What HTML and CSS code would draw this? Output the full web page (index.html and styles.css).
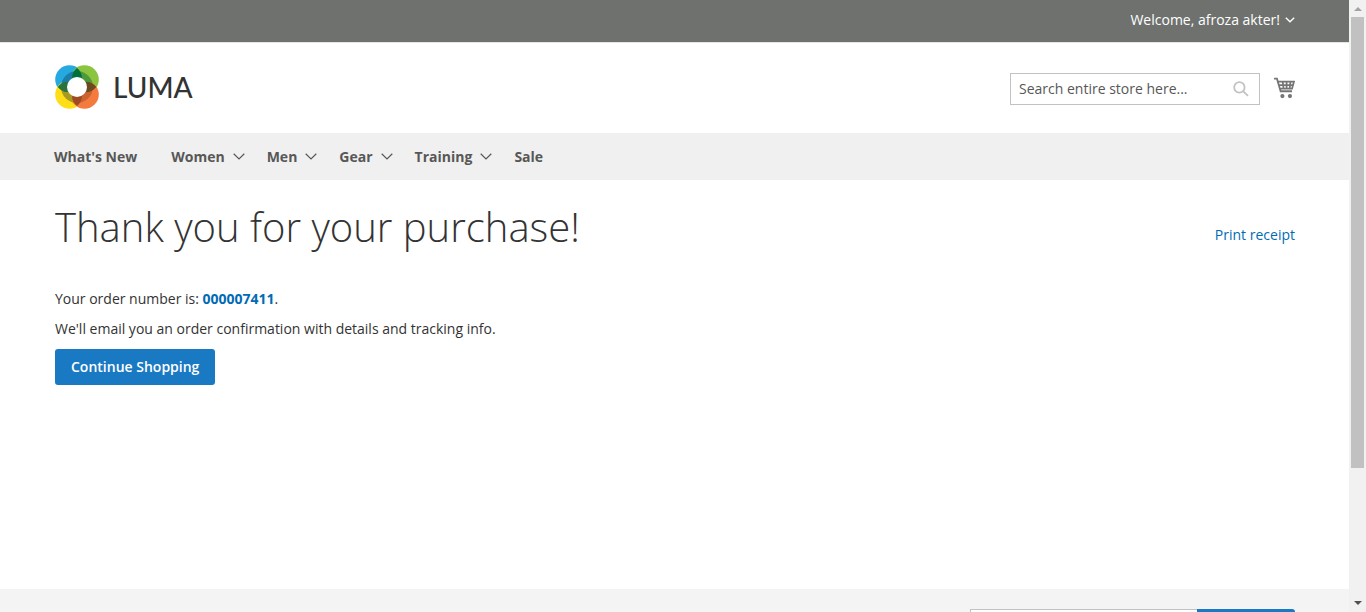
FILE: index.html
```html
<!DOCTYPE html>
<html lang="en">
<head>
<meta charset="utf-8">
<title>Success Page</title>
<link rel="stylesheet" href="styles.css">
</head>
<body>
<div class="window">
  <div class="page">
    <div class="panel">
      <button class="welcome" type="button">Welcome, afroza akter!
        <svg class="welcome-chevron" viewBox="0 0 10 6" aria-hidden="true"><path d="M.8.8 5 4.8 9.2.8"/></svg>
      </button>
    </div>
    <header class="header">
      <a class="logo" href="#" aria-label="Luma">
        <svg class="logo-mark" viewBox="0 0 44 44" aria-hidden="true">
          <circle cx="14.5" cy="14.5" r="14.3" fill="#26a8e0"/>
          <circle cx="29.5" cy="14.5" r="14.3" fill="#8bc53f"/>
          <circle cx="14.5" cy="29.5" r="14.3" fill="#ffde17"/>
          <circle cx="29.5" cy="29.5" r="14.3" fill="#f47b3e"/>
          <path fill="#1b7fa5" d="M22 22V6A16 16 0 0 0 6 22Z"/>
          <path fill="#4e9a3a" d="M22 22V6A16 16 0 0 1 38 22Z"/>
          <path fill="#a89a20" d="M22 22V38A16 16 0 0 1 6 22Z"/>
          <path fill="#cc6231" d="M22 22V38A16 16 0 0 0 38 22Z"/>
          <path fill="#2a733c" d="M3 22A14 14 0 0 1 25 22A14 14 0 0 1 3 22Z"/>
          <path fill="#6b4a20" d="M19 22A14 14 0 0 1 41 22A14 14 0 0 1 19 22Z"/>
          <path fill="#00703c" d="M22 3A12.5 12.5 0 0 1 22 23A12.5 12.5 0 0 1 22 3Z"/>
          <path fill="#a04a23" d="M22 21A12.5 12.5 0 0 1 22 41A12.5 12.5 0 0 1 22 21Z"/>
          <path fill="#2a733c" d="M3 22A12.5 12.5 0 0 1 23 22A12.5 12.5 0 0 1 3 22Z"/>
          <path fill="#6b4a20" d="M21 22A12.5 12.5 0 0 1 41 22A12.5 12.5 0 0 1 21 22Z"/>
          <circle cx="22" cy="22" r="10" fill="#fff"/>
        </svg>
        <span class="logo-name">LUMA</span>
      </a>
      <div class="tools">
        <form class="search">
          <input class="search-input" type="text" aria-label="Search" placeholder="Search entire store here...">
          <button class="search-button" type="button" aria-label="Search">
            <svg viewBox="0 0 16 16" aria-hidden="true"><circle cx="6.4" cy="6.4" r="5.2"/><path d="m10.3 10.3 4.7 4.5"/></svg>
          </button>
        </form>
        <a class="cart" href="#" aria-label="My cart">
          <svg viewBox="0 0 20 21" aria-hidden="true">
            <path class="cart-frame" d="M0 1.6h2.8l3.5 12h10.9M4 4.5h15l-1.8 6.7H6M5 7.8H18M8.3 4.5l.8 6.7M12 4.5v6.7M15.7 4.5l-.8 6.7"/>
            <circle cx="8" cy="18.2" r="2"/><circle cx="15.2" cy="18.2" r="2"/>
          </svg>
        </a>
      </div>
    </header>
    <nav class="nav">
      <a class="nav-link nav-plain" href="#">What's New</a>
      <a class="nav-link" href="#">Women <svg class="chevron" viewBox="0 0 12 7" aria-hidden="true"><path d="M.7.7 6 5.9 11.3.7"/></svg></a>
      <a class="nav-link" href="#">Men <svg class="chevron" viewBox="0 0 12 7" aria-hidden="true"><path d="M.7.7 6 5.9 11.3.7"/></svg></a>
      <a class="nav-link" href="#">Gear <svg class="chevron" viewBox="0 0 12 7" aria-hidden="true"><path d="M.7.7 6 5.9 11.3.7"/></svg></a>
      <a class="nav-link" href="#">Training <svg class="chevron" viewBox="0 0 12 7" aria-hidden="true"><path d="M.7.7 6 5.9 11.3.7"/></svg></a>
      <a class="nav-link" href="#">Sale</a>
    </nav>
    <main class="main">
      <div class="title-row">
        <h1 class="title">Thank you for your purchase!</h1>
        <a class="print" href="#">Print receipt</a>
      </div>
      <p class="text">Your order number is: <a class="order" href="#">000007411</a>.</p>
      <p class="text">We'll email you an order confirmation with details and tracking info.</p>
      <button class="continue" type="button">Continue Shopping</button>
    </main>
    <footer class="footer">
      <form class="newsletter">
        <input class="newsletter-input" type="email" aria-label="Email address">
        <button class="newsletter-button" type="button" aria-label="Subscribe"></button>
      </form>
    </footer>
  </div>
  <div class="scrollbar" aria-hidden="true">
    <svg class="arrow arrow-up" viewBox="0 0 8 4"><path d="M0 4 4 0 8 4Z"/></svg>
    <div class="track"><div class="thumb"></div></div>
    <svg class="arrow arrow-down" viewBox="0 0 8 4"><path d="M0 0 4 4 8 0Z"/></svg>
  </div>
</div>
</body>
</html>
```
FILE: styles.css
```css
* {
  box-sizing: border-box;
}

body {
  margin: 0;
  background: #fff;
  color: #333;
  font: 14px/20px "Open Sans", "Noto Sans", sans-serif;
}

button,
input {
  font: inherit;
}

a {
  color: #006bb4;
  text-decoration: none;
}

svg {
  display: block;
}

.window {
  display: flex;
  height: 100vh;
  overflow: hidden;
}

.page {
  flex: 1;
  display: flex;
  flex-direction: column;
  min-width: 0;
}

.panel {
  flex: none;
  display: flex;
  justify-content: flex-end;
  padding: 10px 54px 12px;
  background: #6e716e;
  border-bottom: 1px solid #e5e5e5;
}

.welcome {
  display: flex;
  align-items: center;
  gap: 5px;
  padding: 0;
  border: 0;
  background: none;
  color: #fff;
}

.welcome-chevron {
  width: 10px;
  height: 6px;
  fill: none;
  stroke: #fff;
  stroke-width: 1.4;
}

.header {
  flex: none;
  display: flex;
  justify-content: space-between;
  align-items: flex-start;
  height: 90px;
  padding: 22px 54px 0 55px;
}

.logo {
  display: flex;
  align-items: center;
  gap: 14px;
  color: #333;
}

.logo-mark {
  width: 44px;
  height: 44px;
}

.logo-name {
  font: 500 28px/36px Lato, sans-serif;
}

.tools {
  display: flex;
  align-items: center;
  gap: 14px;
  padding-top: 8px;
}

.search {
  display: flex;
  align-items: center;
  width: 250px;
  height: 32px;
  padding: 0 10px 0 8px;
  border: 1px solid #c2c2c2;
}

.search-input {
  flex: 1;
  min-width: 0;
  padding: 0;
  border: 0;
  outline: 0;
  background: none;
}

.search-input::placeholder {
  color: #575757;
  opacity: 1;
}

.search-button {
  padding: 0;
  border: 0;
  background: none;
}

.search-button svg {
  width: 16px;
  height: 16px;
  fill: none;
  stroke: #c2c2c2;
  stroke-width: 1.8;
}

.cart {
  padding-bottom: 2px;
}

.cart svg {
  width: 21px;
  height: 22px;
  fill: #757575;
}

.cart .cart-frame {
  fill: none;
  stroke: #757575;
  stroke-width: 1.7;
}

.nav {
  flex: none;
  display: flex;
  gap: 22px;
  height: 47px;
  padding: 0 54px;
  background: #f0f0f0;
}

.nav-link {
  display: flex;
  align-items: center;
  gap: 8px;
  color: #575757;
  font-weight: 700;
}

.nav-plain {
  margin-right: 12px;
}

.chevron {
  width: 12px;
  height: 7px;
  fill: none;
  stroke: #575757;
  stroke-width: 1.2;
}

.main {
  flex: 1;
  padding: 24px 54px 0 55px;
}

.title-row {
  display: flex;
  justify-content: space-between;
  align-items: center;
  margin-bottom: 40px;
}

.title {
  margin: 0;
  font-size: 40px;
  font-weight: 300;
  line-height: 45px;
}

.print {
  padding-top: 16px;
}

.text {
  margin: 0 0 10px;
}

.order {
  font-weight: 700;
}

.continue {
  display: block;
  height: 36px;
  padding: 0 16px;
  border: 0;
  border-radius: 3px;
  background: #1979c3;
  color: #fff;
  font-weight: 600;
}

.footer {
  flex: none;
  display: flex;
  justify-content: flex-end;
  height: 23px;
  padding: 20px 54px 0;
  background: #f4f4f4;
  overflow: hidden;
}

.newsletter {
  display: flex;
  width: 325px;
  height: 32px;
}

.newsletter-input {
  flex: 1;
  min-width: 0;
  border: 1px solid #c2c2c2;
  border-right: 0;
  background: #fff;
}

.newsletter-button {
  width: 98px;
  border: 0;
  border-radius: 0 3px 3px 0;
  background: #1979c3;
}

.scrollbar {
  flex: none;
  display: flex;
  flex-direction: column;
  align-items: center;
  width: 17px;
  padding: 7px 0;
  background: #f1f1f1;
}

.arrow {
  flex: none;
  width: 8px;
  height: 4px;
}

.arrow-up {
  fill: #a3a3a3;
}

.arrow-down {
  fill: #505050;
}

.track {
  flex: 1;
  width: 13px;
  padding: 6px 0;
}

.thumb {
  height: 78%;
  background: #c1c1c1;
}
```
